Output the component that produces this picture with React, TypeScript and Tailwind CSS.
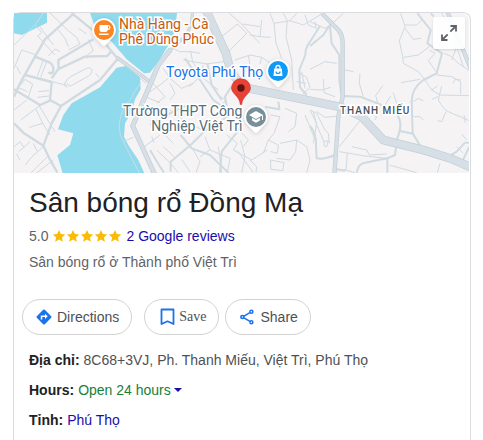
import type { ReactNode } from 'react'
import clsx from 'clsx'

const MINOR_WEST = [
  'M42 135 L105 75 L130 39',
  'M150 39 L205 92',
  'M105 75 L125 98 L113 108 L133 130',
  'M133 130 L165 165',
  'M118 78 L140 108 L160 135',
  'M145 168 L165 147 L180 155',
  'M175 90 L195 115 L205 140',
  'M205 92 L230 112 L240 132 L205 150',
  'M236 85 L260 102',
  'M265 118 L280 152 L262 165 L262 175',
  'M42 205 L65 150 L104 163',
  'M62 222 L50 200',
  'M130 180 L112 228',
  'M140 184 L122 232',
  'M62 255 L75 238 L98 252 L84 295',
  'M54 262 L82 275',
  'M114 275 L147 272 M112 292 L148 288',
  'M155 245 L200 256',
  'M202 262 Q190 258 196 246 Q200 238 215 228 L262 204 Q276 202 276 212 Q276 222 266 228 L215 256 Q204 262 202 250',
  'M287 220 L297 232',
  'M42 330 L80 300',
  'M62 360 L118 318',
  'M118 318 L140 355 L165 395',
  'M108 328 L128 370 L88 382',
  'M128 370 L150 405',
  'M42 440 L60 425 L72 442 L56 455',
  'M72 442 L90 425 M100 430 L112 455',
  'M76 495 L96 470 L132 438',
  'M92 520 L142 470 M108 520 L160 480',
  'M60 480 L50 462',
  'M422 248 Q405 272 392 298 Q370 320 362 350 Q350 390 370 425 L395 475 L418 518',
  'M370 425 L400 412',
  'M440 292 L480 308',
  'M430 442 L480 405 M455 410 L462 428',
  'M420 235 L440 250',
]

const MID_WEST = [
  'M222 40 L135 118 L105 170 L60 250 L42 290',
  'M215 39 L290 100 L352 175',
  'M105 170 L150 188 Q165 200 158 218 Q150 222 146 216',
  'M76 225 L155 246 L150 300 L183 318',
  'M155 235 L176 205 L175 180 L280 118',
  'M176 207 L255 170 L322 168 L335 152',
  'M42 268 L120 315 L150 302',
  'M42 370 L70 398 L130 437',
  'M352 178 L300 240 L183 318 L155 370 L130 437 L148 475 L172 518',
]

const MINOR_MID = [
  'M0 275 L30 255 L60 230',
  'M70 145 L88 155 L122 155 L150 160',
  'M100 180 L170 192 L235 183',
  'M40 205 L60 235 L95 265 L130 250',
  'M0 240 L45 290 L20 310',
  'M122 155 L128 185 L160 235 L205 270',
  'M60 250 L75 280 L60 300',
  'M160 195 L150 230 L118 260',
  'M238 40 L275 72 L300 100 L330 130',
  'M215 110 L262 72 L290 100 L236 155',
  'M335 60 L330 110 L362 112 M278 72 L330 80 M300 105 L330 110',
  'M360 40 L372 70 L420 62 L460 75 L510 45',
  'M372 70 L378 130 L395 175',
  'M400 40 L412 62 L408 110 L425 180 L430 270',
  'M420 62 L440 40',
  'M465 45 L475 75 L500 85',
  'M255 180 L300 165 L335 172 L370 195',
  'M335 172 L330 192 M295 165 L300 195',
  'M445 218 L470 232 L480 262 L450 290',
  'M440 245 L468 250 M455 215 L465 265',
  'M212 290 L228 300 L215 315',
  'M0 360 L40 400 L70 430',
  'M60 330 L88 350 L118 372 L165 392',
  'M20 450 L60 488 L85 518',
  'M0 480 L15 518',
  'M40 440 L72 470',
  'M120 515 L95 478',
  'M130 450 L150 485 L138 518',
  'M165 410 L180 450 L240 475 L232 518',
  'M180 450 L150 470 M205 440 L215 518',
  'M230 405 L262 430 L250 450 L305 480 L352 450',
  'M262 385 L295 420 L280 440',
  'M272 420 L285 470 L275 518',
  'M300 480 L320 500 L318 518 M262 452 L310 518',
  'M362 345 L390 350 L372 400 L355 420 L340 460',
  'M355 420 L385 435 L382 460 L362 455',
  'M405 325 L440 340 L435 380 L415 395',
  'M390 430 L440 420 L437 455 L420 480 L380 475',
  'M362 480 L402 488 L398 512 L362 508 Z',
  'M440 420 L470 440 L480 480 L470 518',
  'M465 345 L500 430 M480 330 L500 370 L490 430',
]

const MID_MID = [
  'M510 78 L480 125 Q465 145 466 165 L448 210 L450 262 L470 285',
  'M105 175 L150 240 L190 300 L232 330',
  'M172 190 L185 255 L215 300',
  'M0 375 L60 340 L105 318',
  'M62 515 L62 485 L125 432 L165 392 L240 345',
  'M92 405 L125 445 L180 465 L235 518',
  'M210 518 L215 455 L270 385',
  'M0 450 L30 500 L42 518',
  'M232 330 L225 290 L245 258',
  'M345 320 L388 328 L385 305',
]

const MINOR_EAST = [
  'M0 65 L45 85 L62 75 L100 40',
  'M15 65 L18 85',
  'M0 208 L25 195 L45 185 L80 190',
  'M0 268 L35 270 L62 262 M40 237 L42 278 L75 290',
  'M105 210 L130 215',
  'M150 220 L148 250 L160 290',
  'M218 257 L195 290 M250 278 L260 310',
  'M242 288 L222 320 M198 290 L205 315',
  'M272 40 L285 80 L268 122 L278 170 L280 190 L325 215 L345 240',
  'M285 75 L320 75 L335 60',
  'M285 85 L310 118 L333 115',
  'M280 172 L325 165 L358 140',
  'M358 150 L375 160 L355 182 L378 215',
  'M273 248 L330 238',
  'M345 240 L365 270 L390 285 L478 287',
  'M380 225 L425 230 L452 245 L452 282',
  'M365 270 L382 258 M365 298 L385 290',
  'M430 250 L435 238 L452 240',
  'M395 258 L385 300 Q400 328 415 335 L478 362',
  'M408 335 L395 365 L383 362 M462 345 L466 368',
  'M310 305 L325 295 L340 303 M310 350 L330 350 L340 360',
  'M402 160 L425 170 L445 190 L478 212',
  'M395 40 L425 90 L440 140 L425 180',
  'M440 140 L460 200',
  'M160 330 L200 350 L195 360',
  'M0 330 L20 340 L45 390 L55 400 L58 430 M10 335 L20 375 L42 425',
  'M42 425 L55 422 L50 440 L42 438 Z',
  'M20 335 L45 352 L85 348',
  'M150 362 L88 440',
  'M125 440 L170 450 L178 465 L230 462',
  'M88 455 L165 468 L230 475',
  'M112 460 L108 510',
  'M238 495 L320 518 M390 490 L382 518',
  'M100 508 L135 518',
  'M455 402 L470 420 M440 440 L460 460',
]

const MID_EAST = [
  'M0 138 L40 105 L62 72',
  'M60 78 L65 130 L88 165 L88 240 L95 290',
  'M322 40 L362 90 L352 130 L396 160 L380 220 L340 240 Q305 265 305 305 L308 400 L332 440',
  'M98 288 L150 290 L215 315 L262 345 Q280 370 262 415 L255 465 L232 475',
  'M270 393 L312 402',
  'M0 378 Q20 400 18 440 L20 475 Q40 480 75 465',
  'M140 518 Q145 490 165 488 L232 475 L232 518',
  'M80 508 L105 512',
  'M362 40 L372 50',
  'M415 470 L440 455 L465 428 L478 428 M455 488 L478 440',
]

type RoadsProps = {
  paths: string[]
  width: number
  color?: string
}

function Roads({ paths, width, color = '#cfdae1' }: Readonly<RoadsProps>) {
  return (
    <g fill="none" stroke={color} strokeWidth={width} strokeLinejoin="round">
      {paths.map((d) => (
        <path key={d} d={d} />
      ))}
    </g>
  )
}

// Wide roads get a slightly darker edge
function MajorRoad({ d, width }: Readonly<{ d: string; width: number }>) {
  return (
    <g fill="none" strokeLinejoin="round">
      <path d={d} stroke="#c2ced6" strokeWidth={width} />
      <path d={d} stroke="#d6dfe6" strokeWidth={width - 4} />
    </g>
  )
}

function MapCanvas() {
  return (
    <svg
      viewBox="42 39 1365 480"
      preserveAspectRatio="xMinYMin slice"
      className="block h-full w-full"
      aria-hidden="true"
    >
      <rect x="0" y="0" width="1500" height="560" fill="#f5f3f4" />
      <g fill="#90daee">
        <path d="M42 39 H141 V68 L66 105 L42 100 Z" />
        <path d="M270 39 H531 L526 80 L515 120 L478 180 L450 218 L432 220 L380 178 L335 125 L285 82 Z" />
        <path d="M350 203 L378 198 L420 232 L422 268 L405 298 L395 335 L375 370 L372 410 L388 440 L415 480 L433 520 H188 L172 466 L210 435 L220 400 L174 388 L190 345 L215 310 L300 262 Z" />
      </g>
      <Roads paths={MINOR_WEST} width={3} />
      <Roads paths={MID_WEST} width={7} />
      <g transform="translate(450 0)">
        <Roads paths={MINOR_MID} width={3} />
        <Roads paths={MID_MID} width={6} />
      </g>
      <g transform="translate(930 0)">
        <Roads paths={MINOR_EAST} width={3} />
        <Roads paths={MID_EAST} width={6} />
      </g>
      <MajorRoad d="M350 172 L450 245" width={11} />
      <MajorRoad d="M578 35 L574 70 L560 105 L505 155" width={9} />
      <MajorRoad d="M512 148 L475 195 L398 378 L465 525" width={15} />
      <MajorRoad d="M965 39 L1015 90 Q1028 105 1028 130 L1028 290 L1015 350 L1003 525" width={13} />
      <MajorRoad d="M1340 30 L1365 90 L1412 205" width={13} />
      <MajorRoad d="M618 30 L650 100 L678 160 L692 215 L730 262 L930 302 L1025 322 L1085 350 L1150 420 L1270 450 L1350 475 L1420 505" width={26} />
    </svg>
  )
}

function MapPin({ color, className, children }: Readonly<{ color: string; className: string; children: ReactNode }>) {
  return (
    <svg viewBox="0 0 24 29" className={clsx('absolute h-[29px] w-6 drop-shadow-sm', className)} aria-hidden="true">
      <path
        d="M12 .2 A11.800 11.800 0 0 1 23.800 12 C23.800 17 20.500 20 17.500 23 L14 27 Q12 29 10 27 L6.500 23 C3.500 20 .2 17 .2 12 A11.800 11.800 0 0 1 12 .2Z"
        fill="#fff"
      />
      <circle cx="12" cy="12" r="10" fill={color} />
      {children}
    </svg>
  )
}

function MapLabel({ className, children }: Readonly<{ className: string; children: ReactNode }>) {
  return (
    <div
      className={clsx(
        'absolute whitespace-nowrap font-[Roboto,sans-serif] leading-[15px] [paint-order:stroke_fill] [-webkit-text-stroke:3px_white]',
        className
      )}
    >
      {children}
    </div>
  )
}

function MapPreview() {
  return (
    <div className="relative mr-px h-40 overflow-hidden rounded-tr-lg">
      <MapCanvas />
      <MapPin color="#fb8523" className="left-[78px] top-[5px]">
        <path d="M7.500 7 H16 Q18.500 7 18.500 9.500 Q18.500 12 15.700 12 Q15.500 14 13.500 14 H9.800 Q7.500 14 7.500 11.700Z M16 8.300 V10.700 Q17.300 10.600 17.300 9.500 Q17.300 8.300 16 8.300Z M7 15.500 H16.500 V17 H7Z" fill="#fff" fillRule="evenodd" />
      </MapPin>
      <MapPin color="#0f9af8" className="left-[252px] top-[46px]">
        <path d="M8.200 9.500 H15.800 L16.500 17 H7.500Z" fill="#fff" />
        <path d="M10 9.800 V8.500 a2 2 0 0 1 4 0 V9.800" fill="none" stroke="#fff" strokeWidth="1.300" />
        <path d="M10 12.500 a2 2 0 0 0 4 0" fill="none" stroke="#0f9af8" strokeWidth="1.200" />
      </MapPin>
      <MapPin color="#78909c" className="left-[230px] top-[92px]">
        <path d="M12 6 L19 10 L12 14 L5 10Z M8 12.800 L12 15 L16 12.800 V15.500 L12 17.800 L8 15.500Z M18 10.500 H19 V15 H18Z" fill="#fff" />
      </MapPin>
      <svg viewBox="0 0 20 27" className="absolute left-[217px] top-[65px] h-[27px] w-5" aria-hidden="true">
        <path
          d="M10 .5 A9.500 9.500 0 0 1 19.500 10 C19.500 16 11.500 17.500 10.700 26.500 H9.300 C8.500 17.500 .5 16 .5 10 A9.500 9.500 0 0 1 10 .5Z"
          fill="#e94235"
          stroke="#c5221f"
          strokeWidth=".5"
        />
        <circle cx="10" cy="10" r="3.700" fill="#601410" />
      </svg>
      <MapLabel className="left-[105px] top-1 text-sm text-[#c75a10]">
        Nhà Hàng - Cà
        <br />
        Phê Dũng Phúc
      </MapLabel>
      <MapLabel className="left-[152px] top-[52px] text-sm text-[#1a73e8]">Toyota Phú Thọ</MapLabel>
      <MapLabel className="left-[109px] top-[91px] text-right text-sm text-[#546e7a]">
        Trường THPT Công
        <br />
        Nghiệp Việt Trì
      </MapLabel>
      <MapLabel className="left-[326px] top-[90px] text-[10px] font-medium tracking-widest text-[#47525c]">
        THANH MIẾU
      </MapLabel>
      <button
        type="button"
        aria-label="Expand map"
        className="absolute right-1 top-1 flex size-8 items-center justify-center rounded-xs bg-white/90 shadow"
      >
        <svg viewBox="0 0 16 16" className="size-4" fill="none" stroke="#5f6368" strokeWidth="1.800" aria-hidden="true">
          <path d="M9.500 1 H15 V6.500 M15 1 L9.300 6.700 M6.500 15 H1 V9.500 M1 15 L6.700 9.300" />
        </svg>
      </button>
    </div>
  )
}

function Star() {
  return (
    <svg viewBox="0 0 24 24" className="size-3.5" fill="#fabb05" aria-hidden="true">
      <path d="M12 1.500 L15.200 8.600 L22.500 9.400 L17 14.500 L18.600 22 L12 18.100 L5.400 22 L7 14.500 L1.500 9.400 L8.800 8.600Z" />
    </svg>
  )
}

const PILL = 'flex h-9 items-center rounded-full border border-[#d2d2d2] text-[#4d5156]'

function Actions() {
  return (
    <div className="mt-[27px] flex px-2">
      <button type="button" className={clsx(PILL, 'gap-[5px] pr-3 pl-[13px]')}>
        <svg viewBox="0 0 16 16" className="size-4" aria-hidden="true">
          <path d="M7.200 .8 Q8 0 8.800 .8 L15.200 7.200 Q16 8 15.200 8.800 L8.800 15.200 Q8 16 7.200 15.200 L.8 8.800 Q0 8 .8 7.200Z" fill="#1a73e8" />
          <path d="M5.500 10.500 V7.300 H9.500" fill="none" stroke="#fff" strokeWidth="1.500" />
          <path d="M9 4.700 L11.700 7.300 L9 9.900Z" fill="#fff" />
        </svg>
        Directions
      </button>
      <button type="button" className={clsx(PILL, "ml-3 gap-1 pr-3 pl-[15px] font-['Liberation_Serif',serif]")}>
        <svg viewBox="0 0 15 18" className="h-[18px] w-[15px]" fill="none" stroke="#1a73e8" strokeWidth="1.800" strokeLinejoin="round" aria-hidden="true">
          <path d="M1.500 1.500 H13.500 V16 L7.500 13.300 L1.500 16Z" />
        </svg>
        Save
      </button>
      <button type="button" className={clsx(PILL, 'ml-1.5 gap-1.5 pr-3 pl-3.5')}>
        <svg viewBox="0 0 14 16" className="h-4 w-3.5" fill="none" stroke="#1a73e8" strokeWidth="1.500" aria-hidden="true">
          <path d="M3.600 7.300 L9.900 3.600 M3.600 8.700 L9.900 12.400" />
          <circle cx="2.300" cy="8" r="1.500" />
          <circle cx="11.400" cy="2.800" r="1.500" />
          <circle cx="11.400" cy="13.200" r="1.500" />
        </svg>
        Share
      </button>
    </div>
  )
}

function Fact({ label, children }: Readonly<{ label: string; children: ReactNode }>) {
  return (
    <div className="flex gap-1">
      <dt className="font-bold text-[#202124]">{label}</dt>
      <dd>{children}</dd>
    </div>
  )
}

export default function App() {
  return (
    <div className="flex min-h-screen flex-col bg-white px-3 pt-3 font-['Liberation_Sans',Arial,sans-serif] text-sm leading-5 text-[#4d5156]">
      <main className="ml-px flex-1 rounded-t-lg border border-b-0 border-[#dadce0] pb-2.5">
        <MapPreview />
        <div className="px-[15px] pt-3">
          <h1 className="text-[28px] leading-9 text-[#202124]">Sân bóng rổ Đồng Mạ</h1>
          <div className="mt-[5px] flex items-center gap-1 text-[#5f6368]">
            <span>5.0</span>
            <span className="flex" role="img" aria-label="Rated 5 out of 5">
              {[1, 2, 3, 4, 5].map((n) => (
                <Star key={n} />
              ))}
            </span>
            <a href="#reviews" className="text-[#1a0dab]">
              2 Google reviews
            </a>
          </div>
          <p className="mt-1.5 text-[#5f6368]">Sân bóng rổ ở Thành phố Việt Trì</p>
        </div>
        <Actions />
        <dl className="mt-[15px] flex flex-col gap-2.5 px-[15px]">
          <Fact label="Địa chỉ:">8C68+3VJ, Ph. Thanh Miếu, Việt Trì, Phú Thọ</Fact>
          <Fact label="Hours:">
            <button type="button" className="flex items-center gap-[3px] text-[#188038]">
              Open 24 hours
              <svg viewBox="0 0 8 4" className="h-1 w-2" fill="#1a0dab" aria-hidden="true">
                <path d="M0 0 H8 L4 4Z" />
              </svg>
            </button>
          </Fact>
          <Fact label="Tỉnh:">
            <a href="#phu-tho" className="text-[#1a0dab]">
              Phú Thọ
            </a>
          </Fact>
        </dl>
      </main>
    </div>
  )
}
